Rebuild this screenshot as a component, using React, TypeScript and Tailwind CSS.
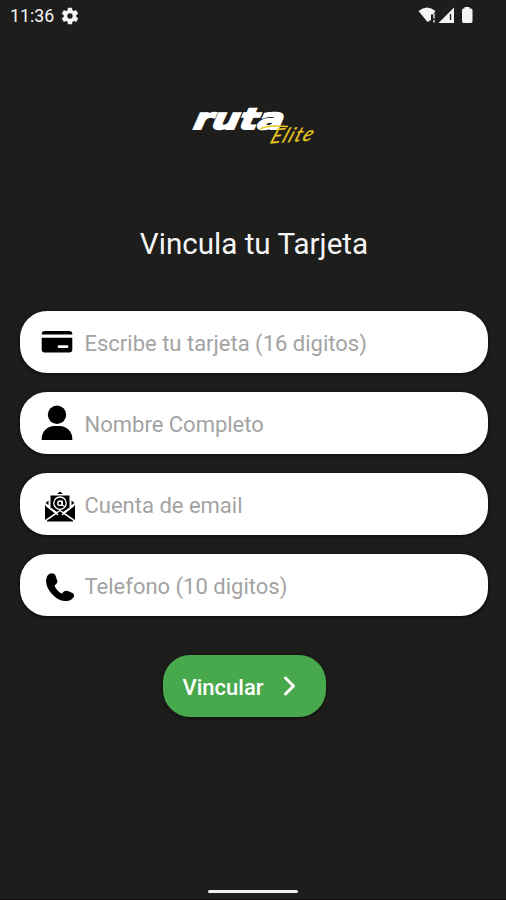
import type { ReactNode } from "react";

function StatusBar() {
  return (
    <header className="flex h-8 items-center pr-[32px] pl-[10px] text-[#f4f4f4]">
      <span className="w-[45px] text-[17.800px] leading-8 whitespace-nowrap">11:36</span>
      <svg className="ml-[5px] h-5 w-5" viewBox="0 0 24 24" fill="currentColor">
        <path d="M19.4 13a7.500 7.500 0 0 0 0-2l2.100-1.650a.5.5 0 0 0 .12-.64l-2-3.460a.5.5 0 0 0-.61-.22l-2.490 1a7.300 7.300 0 0 0-1.690-.98l-.38-2.650A.5.5 0 0 0 14 2h-4a.5.5 0 0 0-.49.42l-.38 2.650c-.61.25-1.170.59-1.690.98l-2.490-1a.5.5 0 0 0-.61.22l-2 3.460a.5.5 0 0 0 .12.64L4.570 11a8 8 0 0 0 0 2l-2.110 1.650a.5.5 0 0 0-.12.64l2 3.460c.12.22.39.3.61.22l2.490-1c.52.4 1.080.73 1.690.98l.38 2.650c.03.24.24.42.49.42h4a.5.5 0 0 0 .49-.42l.38-2.650c.61-.25 1.170-.59 1.690-.98l2.490 1c.23.09.49 0 .61-.22l2-3.460a.5.5 0 0 0-.12-.64zM12 15.200a3.200 3.200 0 1 1 0-6.400 3.200 3.200 0 0 1 0 6.400z" />
      </svg>
      <svg className="ml-auto h-5 w-14" viewBox="418 6 56 20" fill="currentColor">
        <path d="M418.500 11Q427 4 435.500 11L433 14.500H431V20L427.500 22Z" />
        <path d="M433 13.500h2v5h-2zM433 20h2v2.500h-2z" fill="#aaa" />
        <path d="M454 7.500V23h-15.500z" />
        <path d="M450.500 14v6" stroke="#1d1d1b" strokeWidth="1.300" />
        <path d="M464.500 7h5v1.500h1.500q1.500 0 1.500 2V21q0 2-1.500 2h-7.500q-1.500 0-1.500-2V10.500q0-2 1.500-2h1z" />
      </svg>
    </header>
  );
}

function Logo() {
  return (
    <svg className="mx-auto mt-[63px] block h-[60px] w-[150px] shrink-0" viewBox="0 0 150 60">
      <text x="0" y="0" transform="translate(12.500 34) skewX(-24)" fill="#fff" stroke="#fff" strokeWidth="1.800" fontFamily="DejaVu Sans, sans-serif" fontWeight="700" fontSize="29" textLength="90" lengthAdjust="spacingAndGlyphs">ruta</text>
      <text x="0" y="0" transform="translate(91 48.500) rotate(-4) skewX(-26)" fill="#e8c820" stroke="#e8c820" strokeWidth=".2" fontFamily="Lato, sans-serif" fontStyle="italic" fontWeight="400" fontSize="20" textLength="42" lengthAdjust="spacing">Elite</text>
      <path d="M82 34C87 31 98 30.500 110 31.500" fill="none" stroke="#e8c820" strokeWidth="1.300" />
    </svg>
  );
}

function CardIcon() {
  return (
    <svg className="h-[24px] w-[32px]" viewBox="0 0 32 24">
      <path d="M.7 4.500V4q0-3 3-3h24.600q3 0 3 3v.5zM.7 7.800h30.600V19.500q0 3-3 3H3.700q-3 0-3-3z" />
      <path d="M18 16.700h8" stroke="#fff" strokeWidth="2.800" strokeLinecap="round" />
    </svg>
  );
}

function PersonIcon() {
  return (
    <svg className="h-9 w-8" viewBox="0 0 32 36">
      <circle cx="16" cy="9.800" r="9.200" />
      <path d="M.7 35v-1.500C.7 26 7 21 13 21h6c6 0 12.300 5 12.300 12.500V35z" />
    </svg>
  );
}

function EmailIcon() {
  return (
    <svg className="h-[32px] w-[32px]" viewBox="0 0 32 32">
      <path d="M13 3L16 .5l3 2.500zM6.500 4.500h19v12L16 23l-9.500-6.500z" />
      <path d="M1 14l10.500 8L1 29zM31 14l-10.500 8L31 29zM3 29l13-8.500L29 29v1.500H3zM1.500 12l3-2.500v4.500zM30.500 12l-3-2.500v4.500z" />
      <circle cx="16" cy="12.200" r="6.200" fill="none" stroke="#fff" strokeWidth="1.300" />
      <circle cx="16" cy="12.200" r="2.200" fill="none" stroke="#fff" strokeWidth="1.400" />
      <path d="M18.300 9.500v3.700q0 2 2 1.500" fill="none" stroke="#fff" strokeWidth="1.200" />
      <path d="M2 14.500L14 24M30 14.500L18 24M2 29.500L16 19.500 30 29.500" fill="none" stroke="#fff" strokeWidth="1.300" />
    </svg>
  );
}

function PhoneIcon() {
  return (
    <svg className="h-[32px] w-[30px]" viewBox="0 0 30 32">
      <path d="M2 4.500C4 1 8.500 0 10.500 3.500l1.500 4.500c1 2 0 4-2.500 5.500 1 3.500 4 6.500 7.500 8.200 1.500-3 4-3.700 6.500-2.500l4 1.800c2 1.200 2 3.800 0 5.500-5 4.500-13 3-19-3C2.500 18-.5 10.500 2 4.500z" />
    </svg>
  );
}

function Field({ icon, children }: { icon: ReactNode; children: ReactNode }) {
  return (
    <label className="flex h-[62px] w-full items-center rounded-[27px] bg-white pl-[18px] shadow-[0_1px_3px_1px_#101010]">
      <span className="flex w-[38px] shrink-0 items-center justify-center">{icon}</span>
      <span className="ml-[8.500px] pt-[4px] text-[22px] leading-7 whitespace-nowrap text-[#a3a3a3]">{children}</span>
    </label>
  );
}

export default function App() {
  return (
    <main className="flex h-[900px] w-[506px] flex-col overflow-hidden bg-[#1d1d1b] font-[Roboto,sans-serif]">
      <StatusBar />
      <Logo />
      <h1 className="mt-[68px] pl-[2px] text-center text-[29.600px] leading-[42px] font-normal whitespace-nowrap text-[#f5f5f5]">Vincula tu Tarjeta</h1>
      <form className="mt-[46px] flex flex-col items-center gap-[19px] pr-[18px] pl-[20px]">
        <Field icon={<CardIcon />}>Escribe tu tarjeta (16 digitos)</Field>
        <Field icon={<PersonIcon />}>Nombre Completo</Field>
        <Field icon={<span className="pt-[6px] pl-[5px]"><EmailIcon /></span>}>Cuenta de email</Field>
        <Field icon={<span className="pt-[6px] pl-[5px]"><PhoneIcon /></span>}>Telefono (10 digitos)</Field>
        <button type="button" className="mt-5 -ml-[20px] flex h-[62px] w-[163px] items-center rounded-[27px] bg-[#48a84c] pl-5 text-[22px] font-medium text-white shadow-[0_1px_3px_1px_#141414]">
          <span className="w-[81px] pt-[2px] text-left whitespace-nowrap">Vincular</span>
          <svg className="ml-[18px] h-5 w-4" viewBox="0 0 16 20" fill="none" stroke="currentColor" strokeWidth="3" strokeLinecap="round" strokeLinejoin="round">
            <path d="M3.500 2l8 8-8 8" />
          </svg>
        </button>
      </form>
      <div className="mx-auto mt-auto mb-[6px] h-[3px] w-[90px] rounded-full bg-[#f3eff1]" />
      <div className="h-px w-full shrink-0 bg-[#160c11]" />
    </main>
  );
}
